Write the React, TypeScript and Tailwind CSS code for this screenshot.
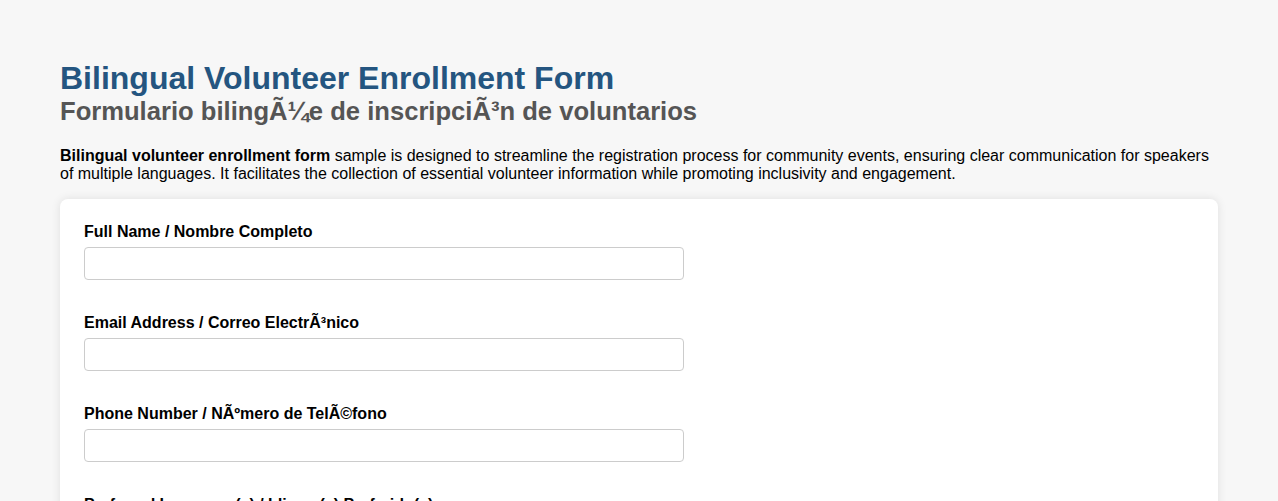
export default function App() {
  const fields = [
    'Full Name / Nombre Completo',
    'Email Address / Correo ElectrÃ³nico',
    'Phone Number / NÃºmero de TelÃ©fono',
    'Preferred Language(s) / Idioma(s) Preferido(s)',
  ]
  return (
    <div
      className="min-h-screen bg-[#f7f7f7] px-[60px] pt-[60px] text-black"
      style={{ fontFamily: '"Liberation Sans", Arial, sans-serif' }}
    >
      <h1 className="text-[32px] font-bold leading-[37px] text-[#245580]">
        Bilingual Volunteer Enrollment Form
      </h1>
      <h2 className="text-[25.6px] font-bold leading-[28px] text-[#555555]">
        Formulario bilingÃ¼e de inscripciÃ³n de voluntarios
      </h2>
      <p className="mt-[22px] text-[16px] leading-[18px]">
        <strong>Bilingual volunteer enrollment form</strong> sample is designed to streamline the registration
        process for community events, ensuring clear communication for speakers of multiple languages. It
        facilitates the collection of essential volunteer information while promoting inclusivity and engagement.
      </p>
      <div className="mt-[16px] rounded-lg bg-white px-6 pt-[24px] pb-6 shadow-[0_0_10px_rgba(0,0,0,0.1)]">
        {fields.map((f) => (
          <div key={f} className="mb-[34px]">
            <label className="block text-[16px] font-bold leading-[18px]">{f}</label>
            <input
              type="text"
              className="mt-[6px] block h-[33px] w-[600px] rounded border border-[#cccccc] bg-white px-2"
            />
          </div>
        ))}
      </div>
    </div>
  )
}
